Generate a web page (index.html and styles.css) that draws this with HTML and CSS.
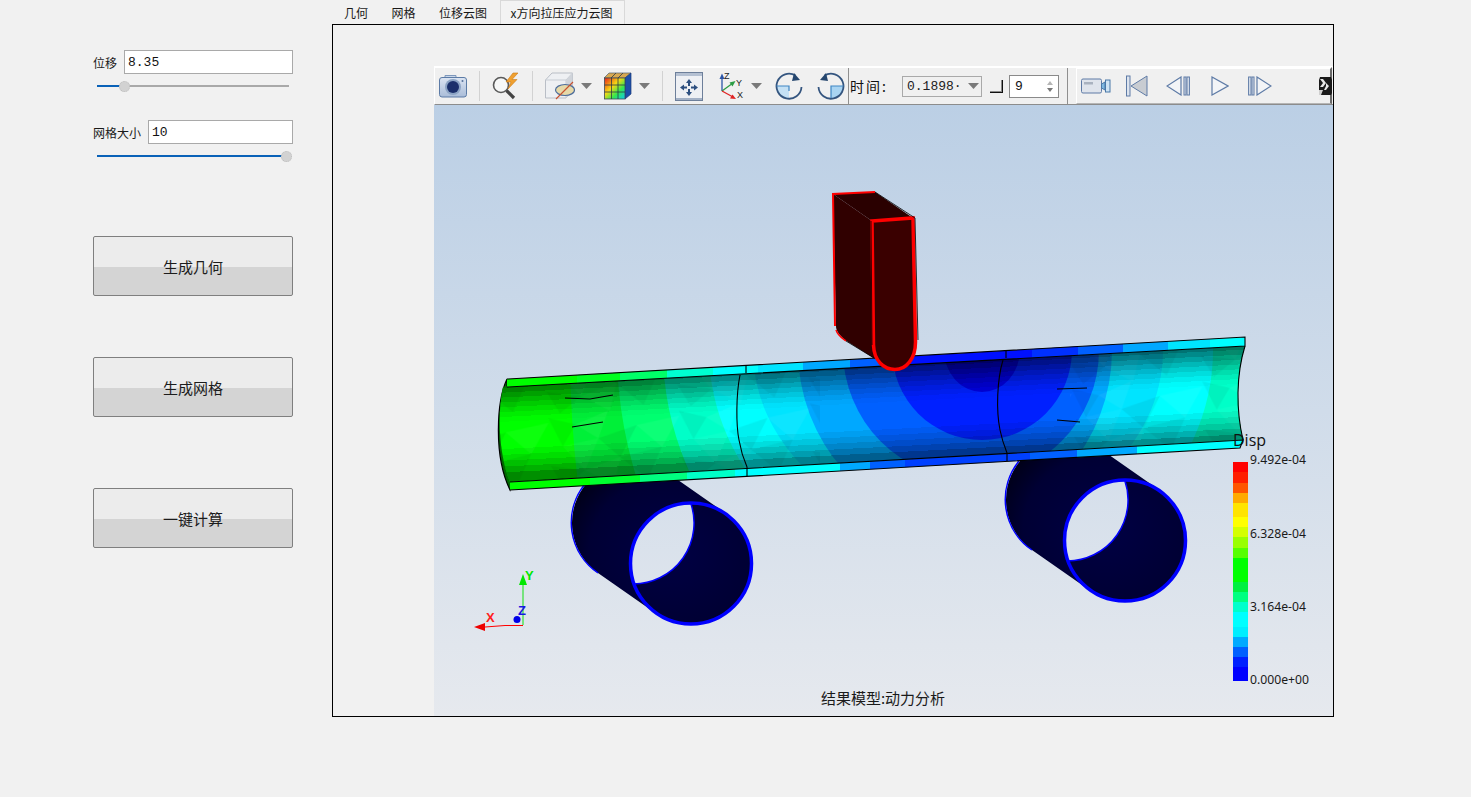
FILE: index.html
```html
<!DOCTYPE html>
<html lang="zh">
<head>
<meta charset="utf-8">
<title>结果模型</title>
<link rel="stylesheet" href="styles.css">
</head>
<body>
<div class="app">
  <aside class="side">
    <div class="field">
      <label class="field-label">位移</label>
      <input class="field-input" value="8.35">
    </div>
    <div class="slider"><div class="slider-fill" style="width:27px"></div><div class="slider-knob" style="left:27px"></div></div>
    <div class="field field-second">
      <label class="field-label">网格大小</label>
      <input class="field-input" value="10">
    </div>
    <div class="slider"><div class="slider-fill" style="width:189px"></div><div class="slider-knob" style="left:189px"></div></div>
    <button class="btn btn-a">生成几何</button>
    <button class="btn btn-b">生成网格</button>
    <button class="btn btn-c">一键计算</button>
  </aside>
  <main class="main">
    <nav class="tabs">
      <span class="tab">几何</span>
      <span class="tab">网格</span>
      <span class="tab">位移云图</span>
      <span class="tab tab-active">x方向拉压应力云图</span>
    </nav>
    <section class="viewer">
      <div class="toolbar">
        <svg class="ico i-cam" width="28" height="24" viewBox="0 0 28 24"><defs><linearGradient id="cb" x1="0" y1="0" x2="0" y2="1"><stop offset="0" stop-color="#dbe4f2"/><stop offset="1" stop-color="#a9bcd8"/></linearGradient></defs><path d="M6 4V1.500h11V4" fill="#c9d6e8" stroke="#7d97bb"/><rect x=".5" y="3.500" width="27" height="19.500" rx="2.500" fill="url(#cb)" stroke="#5c7ba6"/><circle cx="14" cy="13" r="8" fill="#8ba3c4"/><circle cx="14" cy="13" r="6" fill="#1b2f6b"/><circle cx="23.500" cy="7" r="1" fill="#56729c"/></svg>
        <span class="sep s1"></span>
        <svg class="ico i-search" width="30" height="28" viewBox="0 0 30 28"><circle cx="10" cy="13" r="7.500" fill="#f7f8f8" stroke="#5a5a5a" stroke-width="1.600"/><path d="M15.500 18.500 23 26" stroke="#444" stroke-width="3.200"/><path d="M22 1 15 10h5l-3 7 9-9.500h-5L27 1z" fill="#f0a030" stroke="#c97a16" stroke-width=".6"/></svg>
        <span class="sep s2"></span>
        <svg class="ico i-box" width="30" height="28" viewBox="0 0 30 28"><path d="M.5 8 7 1h20.500v17L21 26H.5z" fill="#eef0f3" stroke="#b9bec6"/><path d="M.5 8H21v18M21 8l6.500-7" fill="none" stroke="#c7ccd3"/><path d="M21 8l6.500-7v17L21 26z" fill="#d0d4da"/><ellipse cx="20" cy="18" rx="9.500" ry="5.500" fill="#e6d9a8" stroke="#4d6d9c" stroke-width="1.200"/><path d="M11 27 28 10" stroke="#c9502d" stroke-width="1.100"/></svg>
        <svg class="arrow a1" width="11" height="6" viewBox="0 0 11 6"><path d="M0 0h11L5.500 6z"/></svg>
        <svg class="ico i-cube" width="28" height="28" viewBox="0 0 28 28"><defs><linearGradient id="rb" x1="0" y1="0" x2="1" y2="1"><stop offset="0" stop-color="#e8201a"/><stop offset=".4" stop-color="#f6d814"/><stop offset=".68" stop-color="#30e850"/><stop offset="1" stop-color="#10c8f0"/></linearGradient></defs><path d="M0 6 5 1h22L21 6z" fill="#d8a850" stroke="#51606e" stroke-width=".7"/><path d="M21 6l6-5v21l-6 5z" fill="#1c4fa8" stroke="#1b3a78" stroke-width=".7"/><rect x=".5" y="6" width="20.500" height="21" fill="url(#rb)" stroke="#3c4a58" stroke-width=".8"/><path d="M7.500 6v21M14 6v21M.5 13h20.500M.5 20h20.500M7 6l5-5M14 6l5-5" stroke="#2c3a48" stroke-width=".8"/></svg>
        <svg class="arrow a2" width="11" height="6" viewBox="0 0 11 6"><path d="M0 0h11L5.500 6z"/></svg>
        <span class="sep s3"></span>
        <svg class="ico i-fit" width="28" height="29" viewBox="0 0 28 29"><rect x=".5" y=".5" width="27" height="28" fill="#eef0f4" stroke="#6d7f9a"/><rect x="1" y="1" width="26" height="3" fill="#b4c0d2"/><rect x="1" y="26" width="26" height="2" fill="#a3b1c6"/><g fill="#2d4f80"><path d="M14 7l3 4h-2v3h-2v-3h-2zM14 24l3-4h-2v-3h-2v3h-2zM5 15.500l4-3v2h3v2H9v2zM23 15.500l-4-3v2h-3v2h3v2z"/></g></svg>
        <svg class="ico i-triad" width="32" height="30" viewBox="0 0 32 30"><path d="M3 20V6" stroke="#2a55a8" stroke-width="1.300"/><path d="M3 2.500 .5 8h5z" fill="#2a55a8"/><path d="M3 20 14 12" stroke="#2c9c44" stroke-width="1.300"/><path d="M16.500 10 10.500 11.500l3 4z" fill="#2c9c44"/><path d="M3 20 14 26" stroke="#e02424" stroke-width="1.300"/><path d="M17 28l-6-.5 2.500-4z" fill="#e02424"/><text class="triad-t" x="5" y="8">Z</text><text class="triad-t" x="17" y="15">Y</text><text class="triad-t" x="18" y="27">X</text></svg>
        <svg class="arrow a3" width="11" height="6" viewBox="0 0 11 6"><path d="M0 0h11L5.500 6z"/></svg>
        <svg class="ico i-rot1" width="28" height="28" viewBox="0 0 28 28"><path d="M14 14H1.500A12.500 12.500 0 0 0 14 26.500z" fill="#c4e0f4"/><path d="M20.500 3.500A12.500 12.500 0 1 0 26.500 15" fill="none" stroke="#34557f" stroke-width="1.800"/><path d="M1.500 14H14v5" fill="none" stroke="#3f86c4" stroke-width="1.200"/><path d="M25 8 17 9l2-8z" fill="#25466e"/></svg>
        <svg class="ico i-rot2" width="28" height="28" viewBox="0 0 28 28"><path d="M14 14h12.500A12.500 12.500 0 0 1 14 26.500z" fill="#a9d4f2"/><path d="M7.500 3.500A12.500 12.500 0 1 1 1.500 15" fill="none" stroke="#34557f" stroke-width="1.800"/><path d="M26.500 14H14v12" fill="none" stroke="#3f86c4" stroke-width="1.200"/><path d="M3 8 11 9 9 1z" fill="#25466e"/></svg>
        <span class="sep-full s4"></span>
        <span class="time-label">时间:</span>
        <div class="combo"><span class="combo-text">0.1898·</span><svg class="combo-arrow" width="11" height="6" viewBox="0 0 11 6"><path d="M0 0h11L5.500 6z"/></svg></div>
        <span class="corner"></span>
        <div class="spin"><span class="spin-text">9</span><span class="spin-arrows"><i class="up"></i><i class="down"></i></span></div>
        <span class="sep-full s5"></span>
        <div class="player">
          <svg class="ico p-video" width="30" height="16" viewBox="0 0 30 16"><rect x=".5" y="1" width="20" height="14" rx="1.500" fill="#dfe4ec" stroke="#5e7ba6"/><rect x="3" y="4" width="9" height="2.500" fill="#a9b2bf"/><path d="M20.500 6 24 4v8l-3.500-2z" fill="#7fb8e0" stroke="#4a78a8"/><rect x="24.500" y="2" width="4.500" height="12" fill="#cfe4f4" stroke="#4a78a8"/></svg>
          <svg class="ico p-first" width="22" height="22" viewBox="0 0 22 22"><rect x=".5" y="1" width="3.500" height="20" fill="#dde4ee" stroke="#5e7ba6"/><path d="M21 1v20L5 11z" fill="#c8ccd2" stroke="#5e7ba6"/></svg>
          <svg class="ico p-prev" width="24" height="20" viewBox="0 0 24 20"><path d="M15 1v18L1 10z" fill="#f2f4f7" stroke="#5e7ba6" stroke-width="1.200"/><rect x="18" y="1" width="2" height="18" fill="#dde4ee" stroke="#5e7ba6"/><rect x="21" y="1" width="2.400" height="18" fill="#dde4ee" stroke="#5e7ba6"/></svg>
          <svg class="ico p-play" width="18" height="20" viewBox="0 0 18 20"><path d="M1 1v18l16-9z" fill="#f2f4f7" stroke="#5e7ba6" stroke-width="1.200"/></svg>
          <svg class="ico p-next" width="24" height="20" viewBox="0 0 24 20"><rect x=".6" y="1" width="2.400" height="18" fill="#dde4ee" stroke="#5e7ba6"/><rect x="4" y="1" width="2" height="18" fill="#dde4ee" stroke="#5e7ba6"/><path d="M9 1v18l14-9z" fill="#f2f4f7" stroke="#5e7ba6" stroke-width="1.200"/></svg>
          <svg class="ico p-more" width="13" height="18" viewBox="0 0 13 18"><path d="M1 0h11l1 3v13l-1 2H1l-1-2V3z" fill="#1a1a1a"/><path d="M1 2h3l3 4-3 4H1l3-4zM7 6l3 3-3 4H5l2-4z" fill="#e8e8e8"/><path d="M0 13h4l-2 5H0z" fill="#cfcfcf"/></svg>
        </div>
      </div>
      <svg class="scene" width="899" height="611" viewBox="434 105 899 611">
        <defs>
          <linearGradient id="bg" x1="0" y1="0" x2="0" y2="1">
            <stop offset="0" stop-color="#bbcfe5"/><stop offset=".5" stop-color="#d0dcea"/><stop offset="1" stop-color="#e6e9ee"/>
          </linearGradient>
          <radialGradient id="navy" cx=".55" cy=".55" r=".65"><stop offset="0" stop-color="#000044"/><stop offset=".7" stop-color="#000034"/><stop offset="1" stop-color="#000014"/></radialGradient>
          <linearGradient id="shade" gradientUnits="userSpaceOnUse" x1="870" y1="364" x2="875" y2="461">
            <stop offset="0" stop-opacity=".55"/><stop offset=".05" stop-opacity=".55"/>
            <stop offset=".05" stop-opacity=".46"/><stop offset=".1" stop-opacity=".46"/>
            <stop offset=".1" stop-opacity=".37"/><stop offset=".15" stop-opacity=".37"/>
            <stop offset=".15" stop-opacity=".28"/><stop offset=".2" stop-opacity=".28"/>
            <stop offset=".2" stop-opacity=".2"/><stop offset=".25" stop-opacity=".2"/>
            <stop offset=".25" stop-opacity=".13"/><stop offset=".3" stop-opacity=".13"/>
            <stop offset=".3" stop-opacity=".07"/><stop offset=".35" stop-opacity=".07"/>
            <stop offset=".35" stop-opacity=".02"/><stop offset=".4" stop-opacity=".02"/>
            <stop offset=".4" stop-opacity="0"/><stop offset=".68" stop-opacity="0"/>
            <stop offset=".68" stop-opacity=".06"/><stop offset=".74" stop-opacity=".06"/>
            <stop offset=".74" stop-opacity=".13"/><stop offset=".8" stop-opacity=".13"/>
            <stop offset=".8" stop-opacity=".21"/><stop offset=".86" stop-opacity=".21"/>
            <stop offset=".86" stop-opacity=".31"/><stop offset=".92" stop-opacity=".31"/>
            <stop offset=".92" stop-opacity=".44"/><stop offset="1" stop-opacity=".44"/>
          </linearGradient>
          <pattern id="facets" patternUnits="userSpaceOnUse" width="131" height="74" patternTransform="rotate(-3.200)">
            <path d="M0 4 27 12 13 33z" fill="#000" fill-opacity=".05"/>
            <path d="M27 12 60 0 49 27z" fill="#fff" fill-opacity=".05"/>
            <path d="M49 27 88 16 70 47z" fill="#000" fill-opacity=".06"/>
            <path d="M13 33 49 27 34 58z" fill="#fff" fill-opacity=".04"/>
            <path d="M88 16 131 9 112 39z" fill="#fff" fill-opacity=".05"/>
            <path d="M70 47 112 39 96 70z" fill="#000" fill-opacity=".05"/>
            <path d="M0 52 34 58 12 74z" fill="#000" fill-opacity=".05"/>
            <path d="M34 58 70 47 62 74z" fill="#fff" fill-opacity=".04"/>
          </pattern>
          <clipPath id="tubeclip"><path id="tubepath" d="M503 387 1245 346C1236 375 1236 410 1243 440L510 482C499 455 497 415 503 387Z"/></clipPath>
          <clipPath id="topclip"><path d="M507 379 1245 337 1245 346 507 387Z"/></clipPath>
          <clipPath id="botclip"><path d="M510 482 1243 440 1240 448 510 490Z"/></clipPath>
          <g id="roller">
            <path fill="url(#navy)" fill-rule="evenodd" d="M668 473 726 513.500A61 61 0 0 1 656 613.500L598 573A61 61 0 0 1 668 473ZM690.500 502.500A61 61 0 0 1 633.500 584 61 61 0 0 1 690.500 502.500Z"/>
            <path d="M690.500 502.500A61 61 0 0 1 633.500 584" fill="none" stroke="#0000ff" stroke-width="1.500"/>
            <path d="M598 573A61 61 0 0 1 585 484" fill="none" stroke="#0000ff" stroke-width="1.500"/>
            <circle cx="691" cy="563.500" r="60.500" fill="none" stroke="#0000ff" stroke-width="3.500"/>
          </g>
        </defs>
        <rect x="434" y="105" width="899" height="611" fill="url(#bg)"/>

        <use href="#roller"/>
        <use href="#roller" transform="translate(434 -23)"/>

        <path d="M507 379C497 400 493 455 510 490L512 482C499 455 498 415 507 387Z" fill="#006a00" stroke="#000" stroke-width="1.200"/>

        <g clip-path="url(#tubeclip)">
          <rect x="490" y="330" width="770" height="170" fill="#00ff00"/>
          <ellipse cx="1000" cy="350" rx="430" ry="700" fill="#00f038"/>
          <ellipse cx="990" cy="350" rx="373" ry="400" fill="#00ff70"/>
          <ellipse cx="970" cy="350" rx="307" ry="300" fill="#00ffc8"/>
          <ellipse cx="961" cy="350" rx="252" ry="230" fill="#00ffff"/>
          <ellipse cx="958" cy="350" rx="205" ry="178" fill="#00e4ff"/>
          <ellipse cx="955" cy="350" rx="157" ry="170" fill="#00a8ff"/>
          <ellipse cx="971" cy="350" rx="128" ry="129" fill="#0060ff"/>
          <ellipse cx="982" cy="350" rx="90" ry="90" fill="#0020ff"/>
          <ellipse cx="982" cy="350" rx="38" ry="42" fill="#0000e0"/>
          <rect x="490" y="330" width="330" height="170" fill="url(#facets)"/>
          <rect x="1070" y="330" width="190" height="170" fill="url(#facets)"/>
          <rect x="490" y="330" width="770" height="170" fill="url(#shade)"/>
        </g>

        <g clip-path="url(#topclip)">
          <rect x="500" y="330" width="80" height="60" fill="#00ff00"/>
          <rect x="577" y="330" width="43" height="60" fill="#00ff20"/>
          <rect x="620" y="330" width="47" height="60" fill="#00ff68"/>
          <rect x="667" y="330" width="46" height="60" fill="#00ffd0"/>
          <rect x="713" y="330" width="45" height="60" fill="#00ffff"/>
          <rect x="758" y="330" width="45" height="60" fill="#00e4ff"/>
          <rect x="803" y="330" width="47" height="60" fill="#00a8ff"/>
          <rect x="850" y="330" width="40" height="60" fill="#0060ff"/>
          <rect x="890" y="330" width="188" height="60" fill="#0010ff"/>
          <rect x="1032" y="330" width="46" height="60" fill="#0030ff"/>
          <rect x="1078" y="330" width="45" height="60" fill="#0060ff"/>
          <rect x="1123" y="330" width="45" height="60" fill="#00a8ff"/>
          <rect x="1168" y="330" width="42" height="60" fill="#00e4ff"/>
          <rect x="1210" y="330" width="40" height="60" fill="#00ffff"/>
        </g>
        <g clip-path="url(#botclip)">
          <rect x="505" y="430" width="85" height="65" fill="#00ff00"/>
          <rect x="590" y="430" width="50" height="65" fill="#00ff30"/>
          <rect x="640" y="430" width="47" height="65" fill="#00ff80"/>
          <rect x="687" y="430" width="48" height="65" fill="#00ffc8"/>
          <rect x="735" y="430" width="105" height="65" fill="#00ffff"/>
          <rect x="840" y="430" width="30" height="65" fill="#00a8ff"/>
          <rect x="870" y="430" width="35" height="65" fill="#0060ff"/>
          <rect x="905" y="430" width="125" height="65" fill="#0040ff"/>
          <rect x="1030" y="430" width="47" height="65" fill="#0060ff"/>
          <rect x="1077" y="430" width="60" height="65" fill="#00a8ff"/>
          <rect x="1137" y="430" width="110" height="65" fill="#00ffff"/>
        </g>
        <g fill="none" stroke="#000" stroke-width="1.100">
          <path d="M507 379 1245 337 1245 346 507 387"/>
          <path d="M510 482 1243 440 1240 448 510 490"/>
          <path d="M1245 346C1236 375 1236 410 1243 440"/>
          <path d="M746 366V373M740 375C736 395 736 425 739 440 741 452 744 460 747 467V476"/>
          <path d="M1006 351V358M1003 360C997 380 996 410 1000 430 1002 440 1005 448 1007 453V461"/>
          <path d="M565 398 590 399 613 395M572 427 603 422M1057 389 1087 388M1057 420 1080 422"/>
        </g>

        <path d="M833 194 875 192 913 218 872 221Z" fill="#2a0000"/>
        <path d="M833 194 872 221 875 359 845 340C838 334 836 330 836 326Z" fill="#300000"/>
        <path d="M872 221 913 218 916 342C916 360 906 371 895 371 884 371 873 362 873 345Z" fill="#3a0000"/>
        <path d="M835 326 833 194 875 192" fill="none" stroke="#ff0000" stroke-width="2"/>
        <path d="M836 330C838 336 842 338 846 341" fill="none" stroke="#ff0000" stroke-width="1.500"/>
        <path d="M846 341 874 358" fill="none" stroke="#000" stroke-width=".8"/>
        <path d="M872 221 913 218 915.500 342C915.500 359 906 369.500 895 369.500 884 369.500 874 361 873.500 345Z" fill="none" stroke="#ff0000" stroke-width="3.500"/>
        <path d="M875 192 915 218 918 340M871 221 872 345" fill="none" stroke="#000" stroke-width=".8"/>

        <g class="axes">
          <path d="M523 625V582" stroke="#10e010" stroke-width="1"/>
          <path d="M523 574 519 585h8z" fill="#00e800"/>
          <path d="M523 625.500H505L485 627" fill="none" stroke="#ff0000" stroke-width="1"/>
          <path d="M474 627 485 623v8z" fill="#ee0000"/>
          <circle cx="517" cy="619.500" r="3.500" fill="#0000e8"/>
          <text class="ax ax-y" x="525" y="580">Y</text>
          <text class="ax ax-x" x="486" y="622">X</text>
          <text class="ax ax-z" x="518" y="615">Z</text>
        </g>

        <g>
          <rect x="1233" y="462" width="15" height="10" fill="#ff0000"/>
          <rect x="1233" y="472" width="15" height="11" fill="#ff1e00"/>
          <rect x="1233" y="483" width="15" height="10" fill="#ff5500"/>
          <rect x="1233" y="493" width="15" height="10" fill="#ffaa00"/>
          <rect x="1233" y="503" width="15" height="14" fill="#ffe400"/>
          <rect x="1233" y="517" width="15" height="10" fill="#ffff00"/>
          <rect x="1233" y="527" width="15" height="10" fill="#d4ff00"/>
          <rect x="1233" y="537" width="15" height="11" fill="#99ff00"/>
          <rect x="1233" y="548" width="15" height="10" fill="#55ff00"/>
          <rect x="1233" y="558" width="15" height="24" fill="#00ff00"/>
          <rect x="1233" y="582" width="15" height="10" fill="#00f040"/>
          <rect x="1233" y="592" width="15" height="10" fill="#00ff80"/>
          <rect x="1233" y="602" width="15" height="10" fill="#00ffcc"/>
          <rect x="1233" y="612" width="15" height="15" fill="#00ffff"/>
          <rect x="1233" y="627" width="15" height="10" fill="#00eeff"/>
          <rect x="1233" y="637" width="15" height="10" fill="#00aaff"/>
          <rect x="1233" y="647" width="15" height="10" fill="#0060ff"/>
          <rect x="1233" y="657" width="15" height="10" fill="#0020ff"/>
          <rect x="1233" y="667" width="15" height="14" fill="#0000ff"/>
        </g>
        <text class="legend-title" x="1233" y="446">Disp</text>
        <text class="legend-num" x="1250" y="464">9.492e-04</text>
        <text class="legend-num" x="1250" y="538">6.328e-04</text>
        <text class="legend-num" x="1250" y="611">3.164e-04</text>
        <text class="legend-num" x="1250" y="684">0.000e+00</text>
        <text class="caption" x="883" y="704">结果模型:动力分析</text>
      </svg>
    </section>
  </main>
</div>
</body>
</html>
```

FILE: styles.css
```css
* { box-sizing: border-box; }
html, body { margin: 0; height: 100%; }
body {
  background: #f1f1f1;
  color: #111;
  font-family: "Noto Sans CJK SC", "Noto Sans", sans-serif;
  overflow: hidden;
}
.app { display: flex; width: 1471px; height: 797px; }

/* sidebar */
.side { width: 332px; flex: none; padding: 50px 39px 0 93px; display: flex; flex-direction: column; }
.field { display: flex; align-items: center; height: 24px; gap: 7px; }
.field-second { margin-top: 33px; }
.field-label { font-size: 12px; white-space: nowrap; color: #1a1a1a; }
.field-input {
  flex: 1; min-width: 0; height: 24px; border: 1px solid #a9a9a9; background: #fff;
  padding: 0 3px; font: 13px "Liberation Mono", monospace; color: #111; outline: none; border-radius: 0;
}
.slider { position: relative; margin: 11px 0 0 4px; width: 192px; height: 2px; background: #a9a9a9; flex: none; }
.slider-fill { height: 100%; background: #0a62b8; }
.slider-knob {
  position: absolute; top: -4.5px; margin-left: -5.5px; width: 11px; height: 11px; border-radius: 50%;
  background: #d2d2d2; border: 1px dotted #bdbdbd;
}
.btn {
  display: block; flex: none; width: 200px; height: 60px; border: 1px solid #7f7f7f; border-radius: 2px;
  background: linear-gradient(#ececec 0 51%, #d4d4d4 51% 100%);
  font: 15px "Noto Sans CJK SC", sans-serif; color: #1c1c1c; padding: 0;
}
.btn-a { margin-top: 79px; }
.btn-b { margin-top: 61px; }
.btn-c { margin-top: 71px; }

/* main */
.main { width: 1002px; flex: none; display: flex; flex-direction: column; }
.tabs { display: flex; height: 24px; align-items: stretch; font-size: 12px; color: #1a1a1a; }
.tab { padding: 4px 11.5px 0 12px; line-height: 18px; white-space: nowrap; }
.tab-active {
  background: #f3f3f3; border: 1px solid #d9d9d9; border-bottom: none; margin-left: 1px;
  padding: 3px 10px 0; width: 125px;
}
.viewer { width: 1002px; height: 693px; border: 1px solid #000; padding: 41px 0 0 101px; }

/* toolbar */
.toolbar {
  width: 899px; height: 39px; display: flex; align-items: center;
  border-top: 2px solid #fff; border-bottom: 1px solid #8c8c8c; border-left: 1px solid #fff; background: #f0f0f0;
}
.ico, .arrow { flex: none; display: block; }
.arrow path, .combo-arrow path { fill: #7a7a7a; }
.sep { flex: none; width: 1px; height: 30px; background: #d2d2d2; }
.sep-full { flex: none; width: 1px; align-self: stretch; background: #8f8f8f; }
.i-cam { margin-left: 4px; }
.s1 { margin-left: 12px; }
.i-search { margin-left: 11px; }
.s2 { margin-left: 11px; }
.i-box { margin-left: 12px; }
.a1 { margin-left: 6px; margin-top: -1px; }
.i-cube { margin-left: 12px; }
.a2 { margin-left: 7px; margin-top: -1px; }
.s3 { margin-left: 12px; }
.i-fit { margin-left: 12px; }
.i-triad { margin-left: 16px; }
.a3 { margin-left: 0; margin-top: -1px; }
.i-rot1 { margin-left: 13px; }
.i-rot2 { margin-left: 14px; }
.s4 { margin-left: 3px; }
.time-label { margin-left: 1px; font-size: 14px; width: 52px; flex: none; letter-spacing: 2px; }
.combo {
  flex: none; width: 80px; height: 21px; border: 1px solid #a9a9a9; display: flex; align-items: center;
  padding-left: 4px; background: #f0f0f0;
}
.combo-text { width: 56px; flex: none; white-space: nowrap; font: 13px "Liberation Mono", monospace; color: #222; }
.combo-arrow { margin-left: 5px; flex: none; }
.corner { flex: none; width: 13px; height: 13px; margin-left: 8px; border-right: 1px solid #111; border-bottom: 1px solid #111; box-shadow: inset -1px -1px 0 #8a8a8a; }
.spin {
  flex: none; width: 50px; height: 23px; margin-left: 6px; border: 1px solid #8a8a8a; background: #fff;
  display: flex; align-items: center; justify-content: space-between; padding: 0 5px;
}
.spin-text { font: 13px "Liberation Mono", monospace; color: #111; }
.spin-arrows { display: flex; flex-direction: column; gap: 3px; }
.spin-arrows i { display: block; width: 0; height: 0; border-left: 3px solid transparent; border-right: 3px solid transparent; }
.spin-arrows .up { border-bottom: 4px solid #b5b5b5; }
.spin-arrows .down { border-top: 4px solid #777; }
.s5 { margin-left: 8px; }
.player {
  flex: none; width: 256px; height: 37px; margin-left: 8px; display: flex; align-items: center;
  border-top: 2px solid #fff; border-left: 1px solid #fff; border-right: 2px solid #6a6a6a; border-bottom: 1px solid #b5b5b5; margin-top: -1px;
}
.p-video { margin-left: 4px; }
.p-first { margin-left: 15px; }
.p-prev { margin-left: 18px; }
.p-play { margin-left: 21px; }
.p-next { margin-left: 19px; }
.p-more { margin-left: 47px; }
.triad-t { font: 9px "Liberation Sans", sans-serif; fill: #222; }

/* scene */
.scene { display: block; }
.ax { font: bold 13px "Liberation Sans", sans-serif; }
.ax-y { fill: #00e800; }
.ax-x { fill: #ff2020; }
.ax-z { fill: #1818e0; }
.legend-title { font: 16px "Open Sans", sans-serif; fill: #111; }
.legend-num { font: 12.2px "Noto Sans", sans-serif; fill: #1a1a1a; }
.caption { font: 15px "Noto Sans CJK SC", sans-serif; fill: #1a1a1a; text-anchor: middle; }
```
